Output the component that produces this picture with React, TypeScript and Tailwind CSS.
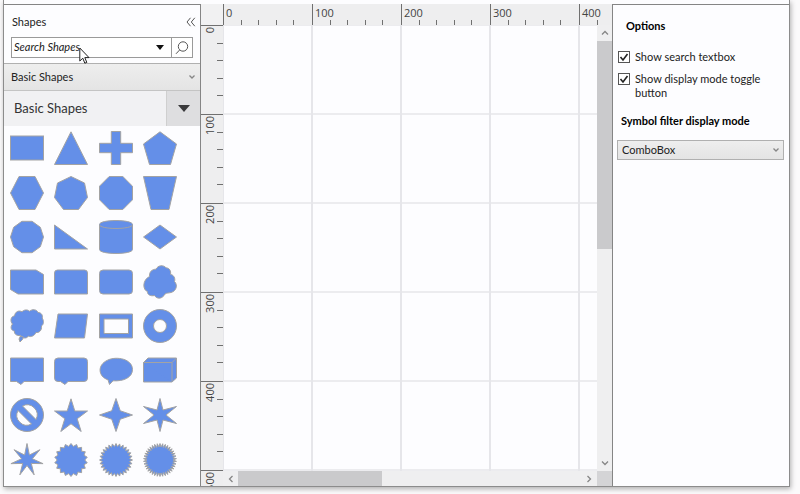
import type { ReactNode } from 'react';

function ring(sides: number, start = -90, radius = 16.5): string {
  return Array.from({ length: sides }, (_, i) => {
    const angle = ((start + (360 / sides) * i) * Math.PI) / 180;
    return `${(17 + radius * Math.cos(angle)).toFixed(2)},${(17 + radius * Math.sin(angle)).toFixed(2)}`;
  }).join(' ');
}

function star(points: number, inner: number): string {
  return Array.from({ length: points * 2 }, (_, i) => {
    const angle = ((-90 + (180 / points) * i) * Math.PI) / 180;
    const radius = i % 2 === 0 ? 16.5 : inner;
    return `${(17 + radius * Math.cos(angle)).toFixed(2)},${(17 + radius * Math.sin(angle)).toFixed(2)}`;
  }).join(' ');
}

const shapes: { name: string; art: ReactNode }[] = [
  { name: 'Rectangle', art: <rect x="0.5" y="5" width="33" height="24" /> },
  { name: 'Triangle', art: <polygon points="17,0.8 33.5,33.5 0.5,33.5" /> },
  { name: 'Cross', art: <path d="M12.3.5h9.4v11.8h11.8v9.4H21.7v11.8h-9.4V21.7H.5v-9.4h11.8z" /> },
  { name: 'Pentagon', art: <polygon points="17,0.8 33.5,13 27.5,33.5 6.5,33.5 0.5,13" /> },
  { name: 'Hexagon', art: <polygon points="9,0.5 25,0.5 33.5,17 25,33.5 9,33.5 0.5,17" /> },
  { name: 'Heptagon', art: <polygon points="17,0.5 30.5,7 33.5,21.5 24.5,33.5 9.5,33.5 0.5,21.5 3.5,7" /> },
  { name: 'Octagon', art: <polygon points="10.2,0.5 23.8,0.5 33.5,10.2 33.5,23.8 23.8,33.5 10.2,33.5 0.5,23.8 0.5,10.2" /> },
  { name: 'Trapezoid', art: <polygon points="0.5,0.5 33.5,0.5 26,33.5 8,33.5" /> },
  { name: 'Decagon', art: <polygon points={ring(10, 0)} /> },
  { name: 'Right triangle', art: <polygon points="0.5,5 33.5,29 0.5,29" /> },
  {
    name: 'Cylinder',
    art: (
      <>
        <path d="M.5 4.5C.5-.8 33.5-.8 33.5 4.5v25c0 5.3-33 5.3-33 0z" />
        <path d="M.5 4.5c0 5.3 33 5.3 33 0" />
      </>
    ),
  },
  { name: 'Diamond', art: <polygon points="17,5 33.5,17 17,29 0.5,17" /> },
  { name: 'Snipped rectangle', art: <polygon points="0.5,5 26,5 33.5,9.5 33.5,29 8,29 0.5,24.5" /> },
  { name: 'Half rounded rectangle', art: <path d="M3.5 5h27q3 0 3 3v21H.5V8q0-3 3-3z" /> },
  { name: 'Rounded rectangle', art: <rect x="0.5" y="5" width="33" height="24" rx="3.5" /> },
  {
    name: 'Cloud',
    art: (
      <path d="M6.500 11.500C6 7 9 4.200 13 4.200 15 0 20.500-.3 23 2.800c3.500.2 5.200 3.200 4.500 6.500 3.500.8 5 4.200 4 7.200 3.500 3.500 2 9.500-3.500 11-2 .6-4.500.3-6 1.500-2.500 5-8 5.500-10.500 1.500C7.500 31.500 4 29.500 4.500 26.500-.5 25 -.8 15 6.500 11.500z" />
    ),
  },
  {
    name: 'Thought callout',
    art: (
      <>
        <path d="M2.500 15C-.3 12 1 7 4.500 7 5 2.500 9 1 12 2.800c2-2.300 5.500-2.500 7.500-.6 2.500-2.300 7.500-2 8.500 1.300 3.500 0 5 3 4.200 5.500 2 3 1.500 6.500-.7 8 .5 4.500-2.500 7-5.500 6.500-1.500 3.500-5.500 5-7.500 3.500-2 3-6 2.500-8-.5-4 .5-6.500-1.500-6-4.500C1 21.500 0 18 2.500 15z" />
        <path d="M10.500 27l3 1-1 2.500-2.500 2.500-1-3z" />
      </>
    ),
  },
  { name: 'Parallelogram', art: <polygon points="4,5 33.5,5 30.500,29 0.5,29" /> },
  { name: 'Frame', art: <path fillRule="evenodd" d="M.5 5h33v24H.5zM5 10v14.500h24.500V10z" /> },
  { name: 'Donut', art: <path fillRule="evenodd" d="M17 .5a16.500 16.500 0 100 33 16.500 16.500 0 000-33zM17 10.500a6.500 6.500 0 110 13 6.500 6.500 0 010-13z" /> },
  { name: 'Rectangular callout', art: <path d="M.5 4h33v23.500H14l-3 3-4.500-3h-6z" /> },
  { name: 'Rounded callout', art: <path d="M4 4h26q3.500 0 3.500 3.500V24q0 3.500-3.500 3.500H14l-3 3-4.500-3H4Q.5 27.500 .5 24V7.500Q.5 4 4 4z" /> },
  { name: 'Oval callout', art: <path d="M9 25.800C-1 22.500 -2 11 8.500 6.200c9-4.400 25-1.200 25 9.300 0 8-9 12-19.500 11.300L10.500 30.500z" /> },
  {
    name: 'Cube',
    art: (
      <>
        <path d="M.5 8.500L5 4h28.500v20L29 28H.5z" />
        <path d="M.5 8.500H29V28M29 8.500L33.500 4" />
      </>
    ),
  },
  {
    name: 'No symbol',
    art: (
      <path
        fillRule="evenodd"
        d="M17 .5a16.500 16.500 0 100 33 16.500 16.500 0 000-33zM12.500 8a10 10 0 0113.500 13.500zM8 12.500L21.500 26A10 10 0 018 12.500z"
      />
    ),
  },
  { name: 'Star 5', art: <polygon points="17,0.8 20.800,13 33.5,13 23.200,20.800 27.200,33.5 17,25.800 6.800,33.5 10.800,20.800 0.5,13 13.200,13" /> },
  { name: 'Star 4', art: <polygon points={star(4, 6)} /> },
  { name: 'Star 6', art: <polygon points="17,0.5 20,12 33.5,8.500 23,17 33.5,25.500 20,22 17,33.5 14,22 0.5,25.500 11,17 0.5,8.500 14,12" /> },
  { name: 'Star 7', art: <polygon points={star(7, 5.5)} /> },
  { name: 'Star 16', art: <polygon points={star(18, 13.8)} /> },
  { name: 'Star 24', art: <polygon points={star(28, 13.5)} /> },
  { name: 'Star 32', art: <polygon points={star(38, 13)} /> },
];

const columnMarks = [0, 100, 200, 300, 400];
const rowMarks = [...columnMarks, 500];

function Chevron({ d, className = '' }: { d: string; className?: string }) {
  return (
    <svg viewBox="0 0 8 8" className={`size-2 fill-none stroke-[#868686] ${className}`} aria-hidden="true">
      <path d={d} strokeWidth="1.3" />
    </svg>
  );
}

function ShapesPanel() {
  return (
    <section className="flex w-[197px] shrink-0 flex-col border-t border-r border-[#858585] bg-[#fdfdff]" aria-label="Shapes">
      <header className="flex h-8 items-center justify-between pt-[2px] pr-1 pl-2">
        <h1>Shapes</h1>
        <button type="button" aria-label="Collapse panel">
          <svg viewBox="0 0 10 10" className="size-[10px] fill-none stroke-[#555]">
            <path d="M4.500.8L1 5l3.500 4.200M8.800.8L5.300 5l3.500 4.200" />
          </svg>
        </button>
      </header>
      <div className="mx-[7px] flex h-[21px] border border-[#9a9a9a] bg-white">
        <input
          type="text"
          aria-label="Search shapes"
          placeholder="Search Shapes"
          className="min-w-0 flex-1 pl-[2px] italic outline-none placeholder:text-[#222] placeholder:opacity-100"
        />
        <button type="button" aria-label="Recent searches" className="flex w-[22px] items-center justify-center">
          <svg viewBox="0 0 8 5" className="h-[5px] w-2 fill-[#111]">
            <path d="M0 0h8L4 5z" />
          </svg>
        </button>
        <button type="button" aria-label="Search" className="flex w-[21px] items-center justify-center border-l border-[#9a9a9a]">
          <svg viewBox="0 0 14 14" className="size-[14px] fill-none stroke-[#555]">
            <circle cx="8" cy="5.500" r="4.700" />
            <path d="M4.600 9L1 12.800" />
          </svg>
        </button>
      </div>
      <div className="relative mt-[5px] h-7 border-y border-[#b0b0b0] border-b-[#c4c4c4]">
        <select aria-label="Shape filter" className="size-full appearance-none bg-linear-to-b from-[#eeeeee] to-[#e4e4e4] pl-[7px] outline-none">
          <option>Basic Shapes</option>
        </select>
        <Chevron d="M1.500 2.500L4 5l2.500-2.500" className="pointer-events-none absolute top-[9px] right-1" />
      </div>
      <div className="flex h-[35px] items-stretch bg-[#f1f1f3]">
        <h2 className="flex flex-1 items-center pl-[10px] text-[13px] text-[#333]">Basic Shapes</h2>
        <button type="button" aria-label="Display mode" className="flex w-[34px] items-center justify-center border-l border-[#cfcfcf] bg-[#dedee0]">
          <svg viewBox="0 0 12 7" className="h-[7px] w-3 fill-[#3a3a3c]">
            <path d="M0 0h12L6 7z" />
          </svg>
        </button>
      </div>
      <ul className="ml-px grid h-[356px] w-[177px] grid-cols-4 grid-rows-8 place-items-center">
        {shapes.map((shape) => (
          <li key={shape.name}>
            <svg viewBox="0 0 34 34" role="img" aria-label={shape.name} className="size-[34px] fill-[#648fe8] stroke-[#a3a3a3]">
              {shape.art}
            </svg>
          </li>
        ))}
      </ul>
    </section>
  );
}

function TopRuler() {
  return (
    <div className="flex h-full min-w-0 flex-1 overflow-hidden bg-[#eeeeef] text-[#444]">
      {columnMarks.map((mark) => (
        <div key={mark} className="flex w-[89px] shrink-0 flex-col justify-between border-l border-[#707070]">
          <span className="pt-[2px] pl-[2px] font-['Open_Sans',sans-serif] leading-[14px]">{mark}</span>
          <div className="grid h-[6px] shrink-0 grid-cols-5 divide-x divide-[#707070]">
            {[0, 1, 2, 3, 4].map((tick) => (
              <i key={tick} />
            ))}
          </div>
        </div>
      ))}
    </div>
  );
}

function SideRuler() {
  return (
    <div className="h-full w-[22px] shrink-0 overflow-hidden bg-[#eeeeef] text-[#444]">
      {rowMarks.map((mark) => (
        <div key={mark} className="flex h-[89px] justify-between border-t border-[#707070]">
          <span className="rotate-180 self-start pr-px pb-px font-['Open_Sans',sans-serif] leading-[15px] [writing-mode:vertical-rl]">{mark}</span>
          <div className="grid w-[6px] grid-rows-5 divide-y divide-[#707070]">
            {[0, 1, 2, 3, 4].map((tick) => (
              <i key={tick} />
            ))}
          </div>
        </div>
      ))}
    </div>
  );
}

function DiagramArea() {
  return (
    <main className="flex min-w-0 flex-1 flex-col">
      <div className="flex h-[21px] shrink-0">
        <div className="w-[22px] shrink-0 bg-[#f1f1f2]" />
        <TopRuler />
      </div>
      <div className="flex min-h-0 flex-1">
        <SideRuler />
        <div className="flex min-w-0 flex-1 flex-col">
          <div className="flex min-h-0 flex-1">
            <div className="min-w-0 flex-1 bg-[#fdfdff] bg-[linear-gradient(to_right,transparent_87px,#e6e6ea_87px),linear-gradient(to_bottom,transparent_87px,#ececef_87px)] bg-size-[89px_89px] bg-position-[1px_1px]" />
            <div className="flex w-[15px] shrink-0 flex-col items-center bg-[#efeff0]">
              <Chevron d="M1 5.500L4 2.500l3 3" className="my-1" />
              <div className="h-[208px] w-full bg-[#cacacc]" />
              <Chevron d="M1 2.500l3 3 3-3" className="mt-auto mb-1" />
            </div>
          </div>
          <div className="flex h-[15px] shrink-0 items-center bg-[#efeff0]">
            <Chevron d="M5.500 1l-3 3 3 3" className="mr-[3px] ml-1 shrink-0" />
            <div className="h-full w-36 bg-[#cacacc]" />
            <Chevron d="M2.500 1l3 3-3 3" className="mr-1 ml-auto shrink-0" />
            <div className="h-full w-[15px] bg-[#d4d4d6]" />
          </div>
        </div>
      </div>
    </main>
  );
}

function Option({ id, label }: { id: string; label: string }) {
  return (
    <div className="flex gap-[5px]">
      <span className="relative mt-px size-3 shrink-0">
        <input id={id} type="checkbox" defaultChecked className="block size-3 appearance-none border border-[#555] bg-white" />
        <svg viewBox="0 0 12 12" className="pointer-events-none absolute inset-0 size-3 fill-none stroke-[#222]" aria-hidden="true">
          <path d="M2.500 6l2.500 3L9.500 3" strokeWidth="1.600" />
        </svg>
      </span>
      <label htmlFor={id} className="leading-[14px]">
        {label}
      </label>
    </div>
  );
}

function OptionsPanel() {
  return (
    <aside className="w-[177px] shrink-0 border-t border-l border-[#858585] bg-[#fdfdff] pr-[5px] pl-1">
      <h2 className="pt-[13px] pl-[9px] leading-4 font-bold text-black">Options</h2>
      <div className="mt-4 flex flex-col gap-2 pr-4 pl-px">
        <Option id="show-search" label="Show search textbox" />
        <Option id="show-toggle" label="Show display mode toggle button" />
      </div>
      <label htmlFor="filter-mode" className="mt-[13px] block pl-1 leading-4 font-bold whitespace-nowrap text-black">
        Symbol filter display mode
      </label>
      <div className="relative mt-[11px] h-5">
        <select id="filter-mode" className="block size-full appearance-none border border-[#b0b0b0] bg-linear-to-b from-[#eeeeee] to-[#e4e4e4] pl-1 outline-none">
          <option>ComboBox</option>
        </select>
        <Chevron d="M1.500 2.500L4 5l2.500-2.500" className="pointer-events-none absolute top-[6px] right-1" />
      </div>
    </aside>
  );
}

export default function App() {
  return (
    <div className="relative h-screen overflow-hidden bg-[#fbfafb] pr-[10px] pb-[7px] pl-[3px] font-['Lato','Open_Sans',sans-serif] text-[11px] text-[#222]">
      <div className="flex h-full border border-t-0 border-[#8c8c8c] bg-[#fdfdff] pt-1 shadow-[1px_2px_5px_rgba(0,0,0,0.3)]">
        <ShapesPanel />
        <DiagramArea />
        <OptionsPanel />
      </div>
      <svg viewBox="0 0 11 18" className="pointer-events-none absolute top-[47px] left-[79px] h-[18px] w-[11px] fill-white stroke-[#222]" aria-hidden="true">
        <path d="M.8 1v13l3-2.800 2 5 2-.8-2-4.800H10z" />
      </svg>
    </div>
  );
}
